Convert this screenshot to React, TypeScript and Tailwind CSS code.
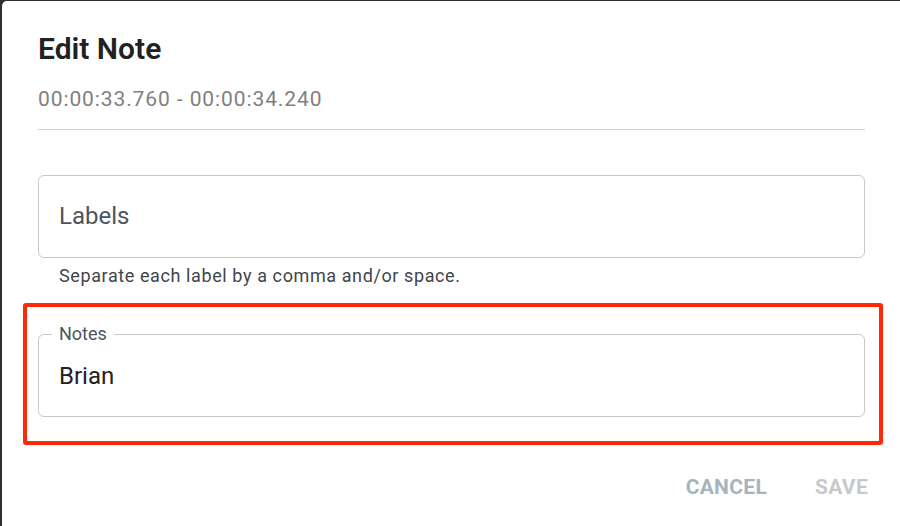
export default function App() {
  return (
    <div className="w-[900px] h-[526px] bg-[#2e2e2e] pl-[2px] pt-[1px] overflow-hidden font-['Roboto',sans-serif]">
      <div className="h-full bg-white rounded-tl-[5px] pl-[36px] pr-[35px] flex flex-col">
        <h2 className="mt-[30px] h-[36px] leading-[36px] text-[30px] font-semibold text-[#212121]">
          Edit Note
        </h2>
        <div className="mt-[18px] h-[28px] leading-[28px] text-[21px] tracking-[0.9px] text-[#7f7f7f]">
          00:00:33.760 - 00:00:34.240
        </div>
        <div className="mt-[16px] h-px bg-[#d2d2d2]" />

        <div className="mt-[45px] h-[83px] rounded-[6px] border border-[#c8c8c8] flex items-center px-[20px] pb-[2px]">
          <span className="text-[24px] text-[#4b545c]">Labels</span>
        </div>
        <p className="mt-[6px] px-[21px] h-[24px] leading-[24px] text-[18px] tracking-[0.6px] text-[#3f454b]">
          Separate each label by a comma and/or space.
        </p>

        <div className="mt-[15px] -ml-[15px] -mr-[18px] border-4 border-[#fe2a07] rounded-[3px] pl-[11px] pr-[14px] pt-[27px] pb-[24px]">
          <div className="relative h-[83px] rounded-[6px] border border-[#c8c8c8] flex items-center px-[20px]">
            <span className="absolute -top-[13px] left-[13px] bg-white px-[7px] leading-[24px] text-[18px] text-[#4b545c]">
              Notes
            </span>
            <span className="text-[24px] text-[#222]">Brian</span>
          </div>
        </div>

        <div className="mt-[27px] flex justify-end gap-[48px] -mr-[3px]">
          <button className="h-[30px] leading-[30px] text-[21px] font-bold tracking-[0.3px] text-[#a8b4bd]">
            CANCEL
          </button>
          <button className="h-[30px] leading-[30px] text-[21px] font-bold tracking-[0.3px] text-[#c6c8ca]">
            SAVE
          </button>
        </div>
      </div>
    </div>
  );
}
